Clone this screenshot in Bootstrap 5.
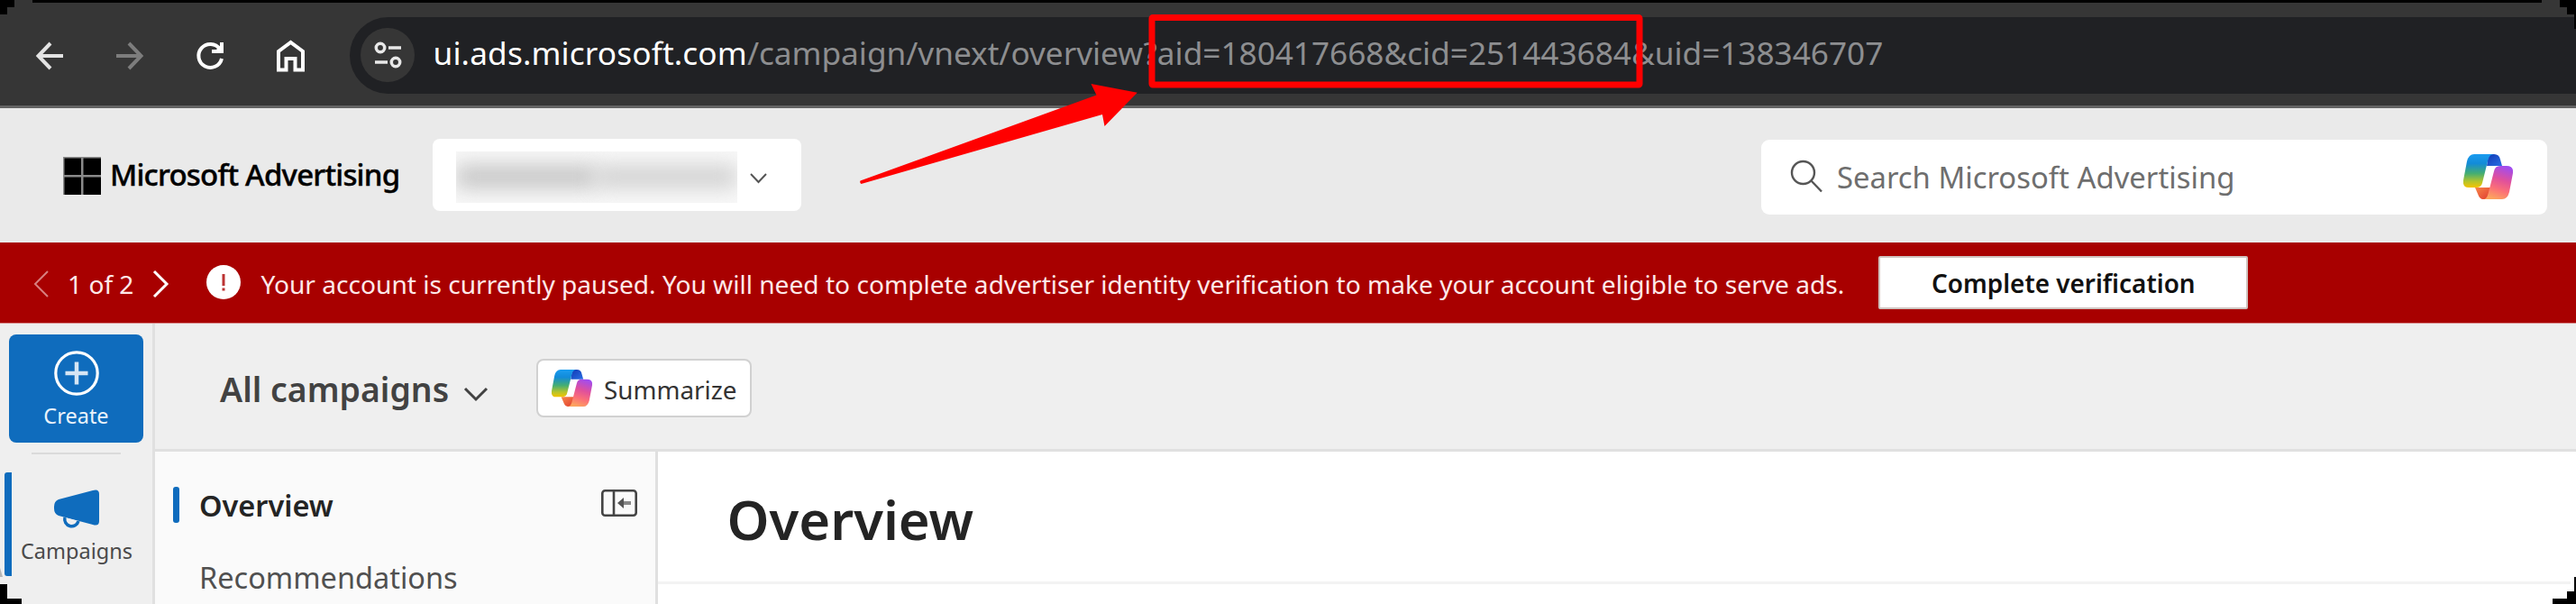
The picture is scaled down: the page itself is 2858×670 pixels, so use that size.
<!DOCTYPE html>
<html lang="en">
<head>
<meta charset="utf-8">
<title>Overview - Microsoft Advertising</title>
<link rel="stylesheet" href="https://cdn.jsdelivr.net/npm/bootstrap@5.3.0/dist/css/bootstrap.min.css">
<style>
  body { font-family: "Noto Sans", "Open Sans", sans-serif; width: 2858px; height: 670px; overflow: hidden; background: #fff; line-height: 1; white-space: nowrap; }
  svg { display: block; flex: none; overflow: visible; }

  /* browser bar */
  .browser-bar { height: 120px; background: #363636; border-top: 3px solid #000; border-bottom: 3px solid #646464; padding-left: 40px; }
  .nav-icon { margin: 3px 59px 0 0; }
  .omnibox { height: 85px; background: #202124; border-radius: 43px 0 0 43px; padding-left: 12px; margin: 2px 0 0 -9px; }
  .site-info { width: 60px; height: 60px; background: #363636; }
  .url { font-size: 35.25px; letter-spacing: -.045px; margin-left: 20.5px; color: #8d8e90; margin-top: -4px; }
  .url-host { color: #fff; letter-spacing: .12px; }

  /* product header */
  .product-bar { height: 149px; background: #eaeaea; padding: 0 32px 0 70px; }
  .brand { font-size: 33px; font-weight: 500; letter-spacing: -.8px; color: #000; margin: -2px 0 0 10px; width: 358px; -webkit-text-stroke: .4px #000; }
  .account-picker { width: 409px; height: 80px; border-radius: 8px; padding-left: 26px; margin-top: -1px; }
  .redacted { width: 312px; height: 57px; background: #f8f8f8; margin-top: 4px; }
  .redacted i { display: block; height: 26px; filter: blur(11px); background: #c6c6c6; }
  .search-box { width: 872px; height: 83px; border-radius: 9px; padding: 0 38px 0 33px; margin-top: 3px; }
  .search-hint { font-size: 32.85px; color: #6e6e6e; margin: 2px 0 0 16px; }

  /* alert */
  .notice { height: 90px; background: #a80000; border-bottom: 1px solid #d98d8d; color: #ffe9e9; font-size: 28.12px; padding: 3px 0 0 37px; }
  .notice .btn { width: 410px; height: 59px; border: 2px solid #cfc4c0; border-radius: 2px; background: #fff; color: #111; font-size: 27.9px; font-weight: 600; line-height: 1; margin: -3px 0 0 38px; padding: 3px 0 0; }

  /* work area */
  .rail { width: 172px; height: 311px; background: #efefef; border-right: 3px solid #e0e0e0; font-size: 23.5px; }
  .create-btn { width: 149px; height: 120px; margin: 12px 0 0 10px; border-radius: 8px; background: #0f6cbd; color: #e9f2fa; padding-top: 18px; }
  .rail-line { width: 99px; height: 2px; margin: 11px 0 0 35px; background: #dadada; }
  .rail-item { height: 115px; margin: 20px 12px 0 5px; color: #4a4a4a; padding-top: 19px; border-left: 8px solid #0f6cbd; border-radius: 3px; }
  .toolbar-strip { height: 142px; background: #efefef; border-bottom: 3px solid #e0e0e0; padding-left: 72px; }
  .scope { font-size: 37.4px; font-weight: 600; color: #424242; margin-top: 6px; }
  .summarize { width: 239px; height: 65px; border: 2px solid #d1d1d1; border-radius: 8px; background: #fff; font-size: 27.8px; color: #333; padding-left: 15px; margin-left: 54px; margin-top: 3px; }
  .side-nav { width: 558px; background: #fafafa; border-right: 3px solid #e0e0e0; padding: 39px 20px 0 20px; font-size: 32.5px; }
  .active-mark { width: 7px; height: 40px; border-radius: 3px; background: #0f6cbd; }
  .page-head { height: 147px; border-bottom: 3px solid #f3f3f3; padding: 46px 0 0 76.5px; margin-right: 6px; }
  .page-head h1 { font-size: 59.8px; font-weight: 600; color: #242424; line-height: 1; margin: 0; }

  .overlay { left: 0; top: 0; pointer-events: none; }
</style>
</head>
<body class="position-relative">

<svg width="0" height="0" class="position-absolute" aria-hidden="true">
  <defs>
    <linearGradient id="cLeft" x1="0" y1="0" x2="0" y2="1"><stop offset="0" stop-color="#1a9cf0"/><stop offset=".28" stop-color="#128bd8"/><stop offset=".58" stop-color="#45ae72"/><stop offset=".82" stop-color="#b5c42c"/><stop offset="1" stop-color="#f5c400"/></linearGradient>
    <linearGradient id="cRight" x1=".7" y1="0" x2=".4" y2="1"><stop offset="0" stop-color="#a04cf0"/><stop offset=".4" stop-color="#e0509c"/><stop offset=".7" stop-color="#fb6f78"/><stop offset="1" stop-color="#fca45e"/></linearGradient>
    <linearGradient id="cTop" x1="0" y1="0" x2="1" y2="1"><stop offset="0" stop-color="#1238b4"/><stop offset="1" stop-color="#2a70e4"/></linearGradient>
    <linearGradient id="cBottom" x1="0" y1="0" x2="1" y2="1"><stop offset="0" stop-color="#f8874a"/><stop offset="1" stop-color="#e03c30"/></linearGradient>
    <symbol id="copilot" viewBox="0 0 55 50">
      <path d="M28 0h6q6 0 7 6l2 7H26z" fill="url(#cTop)"/>
      <path d="M28 50h-6q-4 0-6-6l-3-7h17z" fill="url(#cBottom)"/>
      <path d="M12 0h22q-5 0-6.500 6L21 32q-1 5-7 5H6q-7 0-6-8L4 8Q6 0 12 0z" fill="url(#cLeft)"/>
      <path d="M43 50H22q4 0 5.500-6L34 19q1-6 7-6h7q8 0 7 8l-4 21q-2 8-8 8z" fill="url(#cRight)"/>
      <path d="M27.500 15h7.500q-1.500 1-2.200 4l-4 15q-.8 2-2.800 2h-5q1-1.500 1.500-3.500z" fill="#fff"/>
    </symbol>
  </defs>
</svg>

<nav class="browser-bar d-flex align-items-center">
  <svg class="nav-icon" width="30" height="30" fill="none" stroke="#e3e3e3" stroke-width="4"><path d="M30 15H3M16 1 2.500 15 16 29"/></svg>
  <svg class="nav-icon" width="30" height="30" fill="none" stroke="#7d7d7d" stroke-width="4"><path d="M0 15h27M14 1l13.500 14L14 29"/></svg>
  <svg class="nav-icon" width="30" height="30" fill="none" stroke="#fff" stroke-width="4"><path d="M26 7.500A13 13 0 1 0 28 18M28 0v10H17"/><path d="M28 2v9h-9z" fill="#fff" stroke="none"/></svg>
  <svg class="nav-icon" width="31" height="34" fill="none" stroke="#fff" stroke-width="4"><path d="M2 32.500V12L15.500 2 29 12v20.500h-8.500V20h-10v12.500z"/></svg>
  <div class="omnibox d-flex align-items-center flex-grow-1 z-1">
    <div class="site-info rounded-circle d-flex align-items-center justify-content-center">
      <svg width="31" height="30" fill="none" stroke="#e8e8e8" stroke-width="3.500"><circle cx="7" cy="7" r="4.700"/><path d="M16 7h14M1 23h14"/><circle cx="24" cy="23" r="4.700"/></svg>
    </div>
    <div class="url"><span class="url-host">ui.ads.microsoft.com</span>/campaign/vnext/overview?aid=180417668&amp;cid=251443684&amp;uid=138346707</div>
  </div>
</nav>

<header class="product-bar d-flex align-items-center">
  <svg width="42" height="42"><path d="M0 0h42v42H0z" fill="#8a8a8a"/><path d="M1.500 1.500h18.500v18.500H1.500zM22.500 1.500H42v18.500H22.500zM1.500 22.500h18.500V42H1.500zM22.500 22.500H42V42H22.500z"/></svg>
  <div class="brand">Microsoft Advertising</div>
  <div class="account-picker bg-white d-flex align-items-center">
    <div class="redacted d-flex align-items-center overflow-hidden"><i class="w-50"></i><i class="w-50" style="opacity:.75"></i></div>
    <svg width="19" height="11" fill="none" stroke="#555" stroke-width="2" style="margin:6px 0 0 14px"><path d="m1 1 8.500 9L18 1"/></svg>
  </div>
  <div class="search-box bg-white d-flex align-items-center ms-auto">
    <svg width="35" height="35" fill="none" stroke="#555" stroke-width="2.400" style="margin-top:-2px"><circle cx="13.500" cy="13.500" r="12.500"/><path d="m22.500 22.500 11.500 12"/></svg>
    <div class="search-hint">Search Microsoft Advertising</div>
    <svg class="ms-auto" width="55" height="50"><use href="#copilot"/></svg>
  </div>
</header>

<div class="notice d-flex align-items-center">
  <svg width="17" height="30" fill="none" stroke="#d77f7f" stroke-width="2"><path d="M16 1 2 15l14 14"/></svg>
  <span style="margin-left:21px">1 of 2</span>
  <svg width="17" height="30" fill="none" stroke="#fff" stroke-width="3" style="margin-left:21px"><path d="m2 1 14 14L2 29"/></svg>
  <svg width="38" height="38" style="margin:-5px 0 0 43px"><circle cx="19" cy="19" r="19" fill="#fff"/><path d="M17.500 10h3v13h-3zM17.500 25.500h3v3h-3z" fill="#b33"/></svg>
  <span style="margin-left:22px">Your account is currently paused. You will need to complete advertiser identity verification to make your account eligible to serve ads.</span>
  <button class="btn">Complete verification</button>
</div>

<div class="d-flex">
  <aside class="rail">
    <div class="create-btn d-flex flex-column align-items-center">
      <svg width="50" height="50" fill="none" stroke="#fff" stroke-width="3.200"><circle cx="25" cy="25" r="23.200"/><path stroke="#d5e5f4" stroke-width="4.500" d="M25 12.500v25M12.500 25h25"/></svg>
      <span style="margin-top:11px">Create</span>
    </div>
    <div class="rail-line"></div>
    <div class="rail-item d-flex flex-column align-items-center">
      <svg width="50" height="42"><path d="M5 11 43 1q7-2 7 4v30q0 6-7 4L5 29q-5-2-5-8v-2q0-6 5-8z" fill="#0f6cbd"/><path d="M12 31a7.500 7.500 0 0 0 15 4" fill="#efefef" stroke="#0f6cbd" stroke-width="3.500"/></svg>
      <span style="margin-top:15px">Campaigns</span>
    </div>
  </aside>

  <div class="flex-grow-1 d-flex flex-column">
    <div class="toolbar-strip d-flex align-items-center">
      <div class="scope">All campaigns</div>
      <svg width="26" height="14" fill="none" stroke="#424242" stroke-width="3" style="margin:16px 0 0 17px"><path d="m1 1 12 12L25 1"/></svg>
      <button class="summarize d-flex align-items-center">
        <svg width="45" height="41"><use href="#copilot"/></svg>
        <span style="margin:5px 0 0 13px">Summarize</span>
      </button>
    </div>
    <div class="d-flex flex-grow-1">
      <div class="side-nav">
        <div class="d-flex align-items-center">
          <span class="active-mark"></span>
          <span class="fw-semibold" style="margin:2px 0 0 22px;color:#242424">Overview</span>
          <svg class="ms-auto" width="40" height="30" fill="none" stroke="#444" stroke-width="2.600" style="margin-top:-4px"><rect x="1.300" y="1.300" width="37.400" height="27.400" rx="3"/><path d="M14 1v28"/><path d="M22 15h11" stroke="#888" stroke-width="4"/><path d="m25 9-7 6 7 6z" fill="#555" stroke="none"/></svg>
        </div>
        <div style="margin:45px 0 0 29px;color:#505050">Recommendations</div>
      </div>
      <main class="flex-grow-1 bg-white">
        <div class="page-head"><h1>Overview</h1></div>
      </main>
    </div>
  </div>
</div>

<!-- annotation and clipped window corners -->
<svg class="overlay position-absolute z-2" width="2858" height="670" viewBox="0 0 2858 670">
  <rect x="1278" y="19.500" width="541" height="74.500" rx="1" fill="none" stroke="#f00" stroke-width="7"/>
  <path d="M1261.800 102.700 1210.500 93l6 12.500-262 95q-1 2 1 3.500L1223 127l2.500 13z" fill="#f00"/>
  <path d="M16 0h20v3H16zM2820 0h20v3h-20z" fill="#363636"/>
  <path d="M0 0h16v8H8v8H0zM2858 0h-18v8h8v8h8v16h2zM0 648h8v16h16v6H0zM2858 640h-2v16h-8v8h-16v6h26z"/>
  <path d="M0 630l3 10H0z" fill="#b5b5b5"/>
</svg>

<script src="https://cdn.jsdelivr.net/npm/bootstrap@5.3.0/dist/js/bootstrap.bundle.min.js"></script>
</body>
</html>
